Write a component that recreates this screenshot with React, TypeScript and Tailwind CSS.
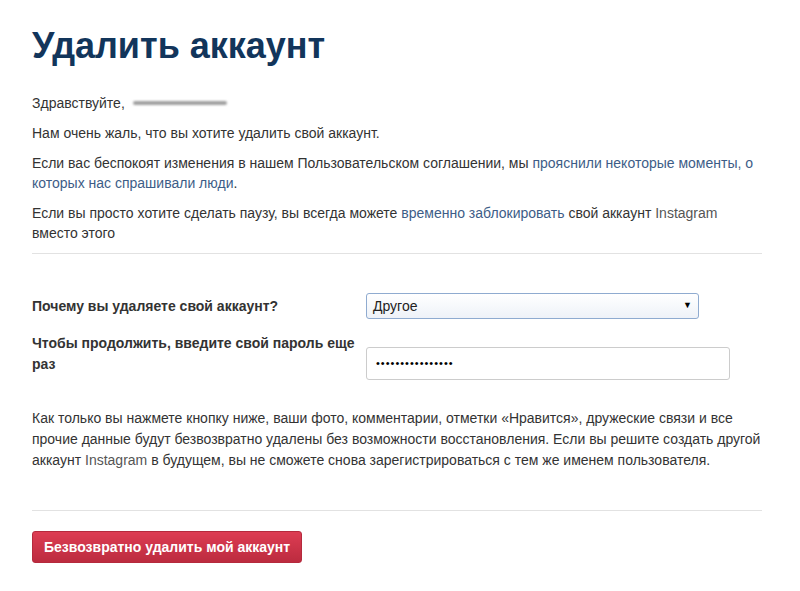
import React from 'react';

const font = { fontFamily: '"Liberation Sans", Arial, sans-serif' };

export default function App() {
  return (
    <div
      className="min-h-[591px] w-[800px] bg-white pl-[32px] pr-[38px] text-[14px] text-[#333333]"
      style={font}
    >
      {/* Header */}
      <h1 className="pt-[24px] text-[36px] font-bold leading-[44px] text-[#12355b]">Удалить аккаунт</h1>

      <div className="mt-[25px] flex flex-col gap-[10px] leading-[20px]">
        <p className="flex items-center">
          Здравствуйте,
          <span className="ml-[8px] inline-block h-[4px] w-[94px] rounded-full bg-[#a0a0a0] blur-[1px]" />
        </p>
        <p>Нам очень жаль, что вы хотите удалить свой аккаунт.</p>
        <p>
          Если вас беспокоят изменения в нашем Пользовательском соглашении, мы{' '}
          <a className="text-[#3d5d87]">прояснили некоторые моменты, о которых нас спрашивали люди</a>.
        </p>
        <p>
          Если вы просто хотите сделать паузу, вы всегда можете{' '}
          <a className="text-[#3d5d87]">временно заблокировать</a> свой аккаунт{' '}
          <span className="text-[#555]">Instagram</span> вместо этого
        </p>
      </div>

      <hr className="mt-[10px] border-t border-[#e2e2e2]" />

      {/* Form */}
      <div className="mt-[39px] flex flex-col font-bold">
        <div className="flex items-start">
          <label className="mt-[3px] w-[334px] leading-[20px]">Почему вы удаляете свой аккаунт?</label>
          <div className="flex h-[26px] w-[333px] items-center justify-between rounded-[3px] border border-[#8fabd0] bg-gradient-to-b from-[#ffffff] to-[#eef2f8] px-[6px] font-normal text-[#222]">
            <span>Другое</span>
            <span className="text-[9px] text-black">▼</span>
          </div>
        </div>
        <div className="mt-[14px] flex items-start">
          <label className="w-[334px] leading-[21px]">Чтобы продолжить, введите свой пароль еще раз</label>
          <div className="mt-[14px] flex h-[33px] w-[364px] items-center rounded-[3px] border border-[#cccccc] pl-[9px] text-[11px] font-normal tracking-[1px] text-black">
            ••••••••••••••••
          </div>
        </div>
      </div>

      <p className="mt-[28px] leading-[21px]">
        Как только вы нажмете кнопку ниже, ваши фото, комментарии, отметки «Нравится», дружеские связи и все прочие
        данные будут безвозвратно удалены без возможности восстановления. Если вы решите создать другой аккаунт{' '}
        <span className="text-[#555]">Instagram</span> в будущем, вы не сможете снова зарегистрироваться с тем же
        именем пользователя.
      </p>

      <hr className="mt-[39px] border-t border-[#e2e2e2]" />

      <button className="mt-[20px] h-[32px] rounded-[3px] border border-[#b52a3d] bg-gradient-to-b from-[#dd3d53] to-[#bc2b3f] px-[11px] font-bold text-white">
        Безвозвратно удалить мой аккаунт
      </button>
    </div>
  );
}
